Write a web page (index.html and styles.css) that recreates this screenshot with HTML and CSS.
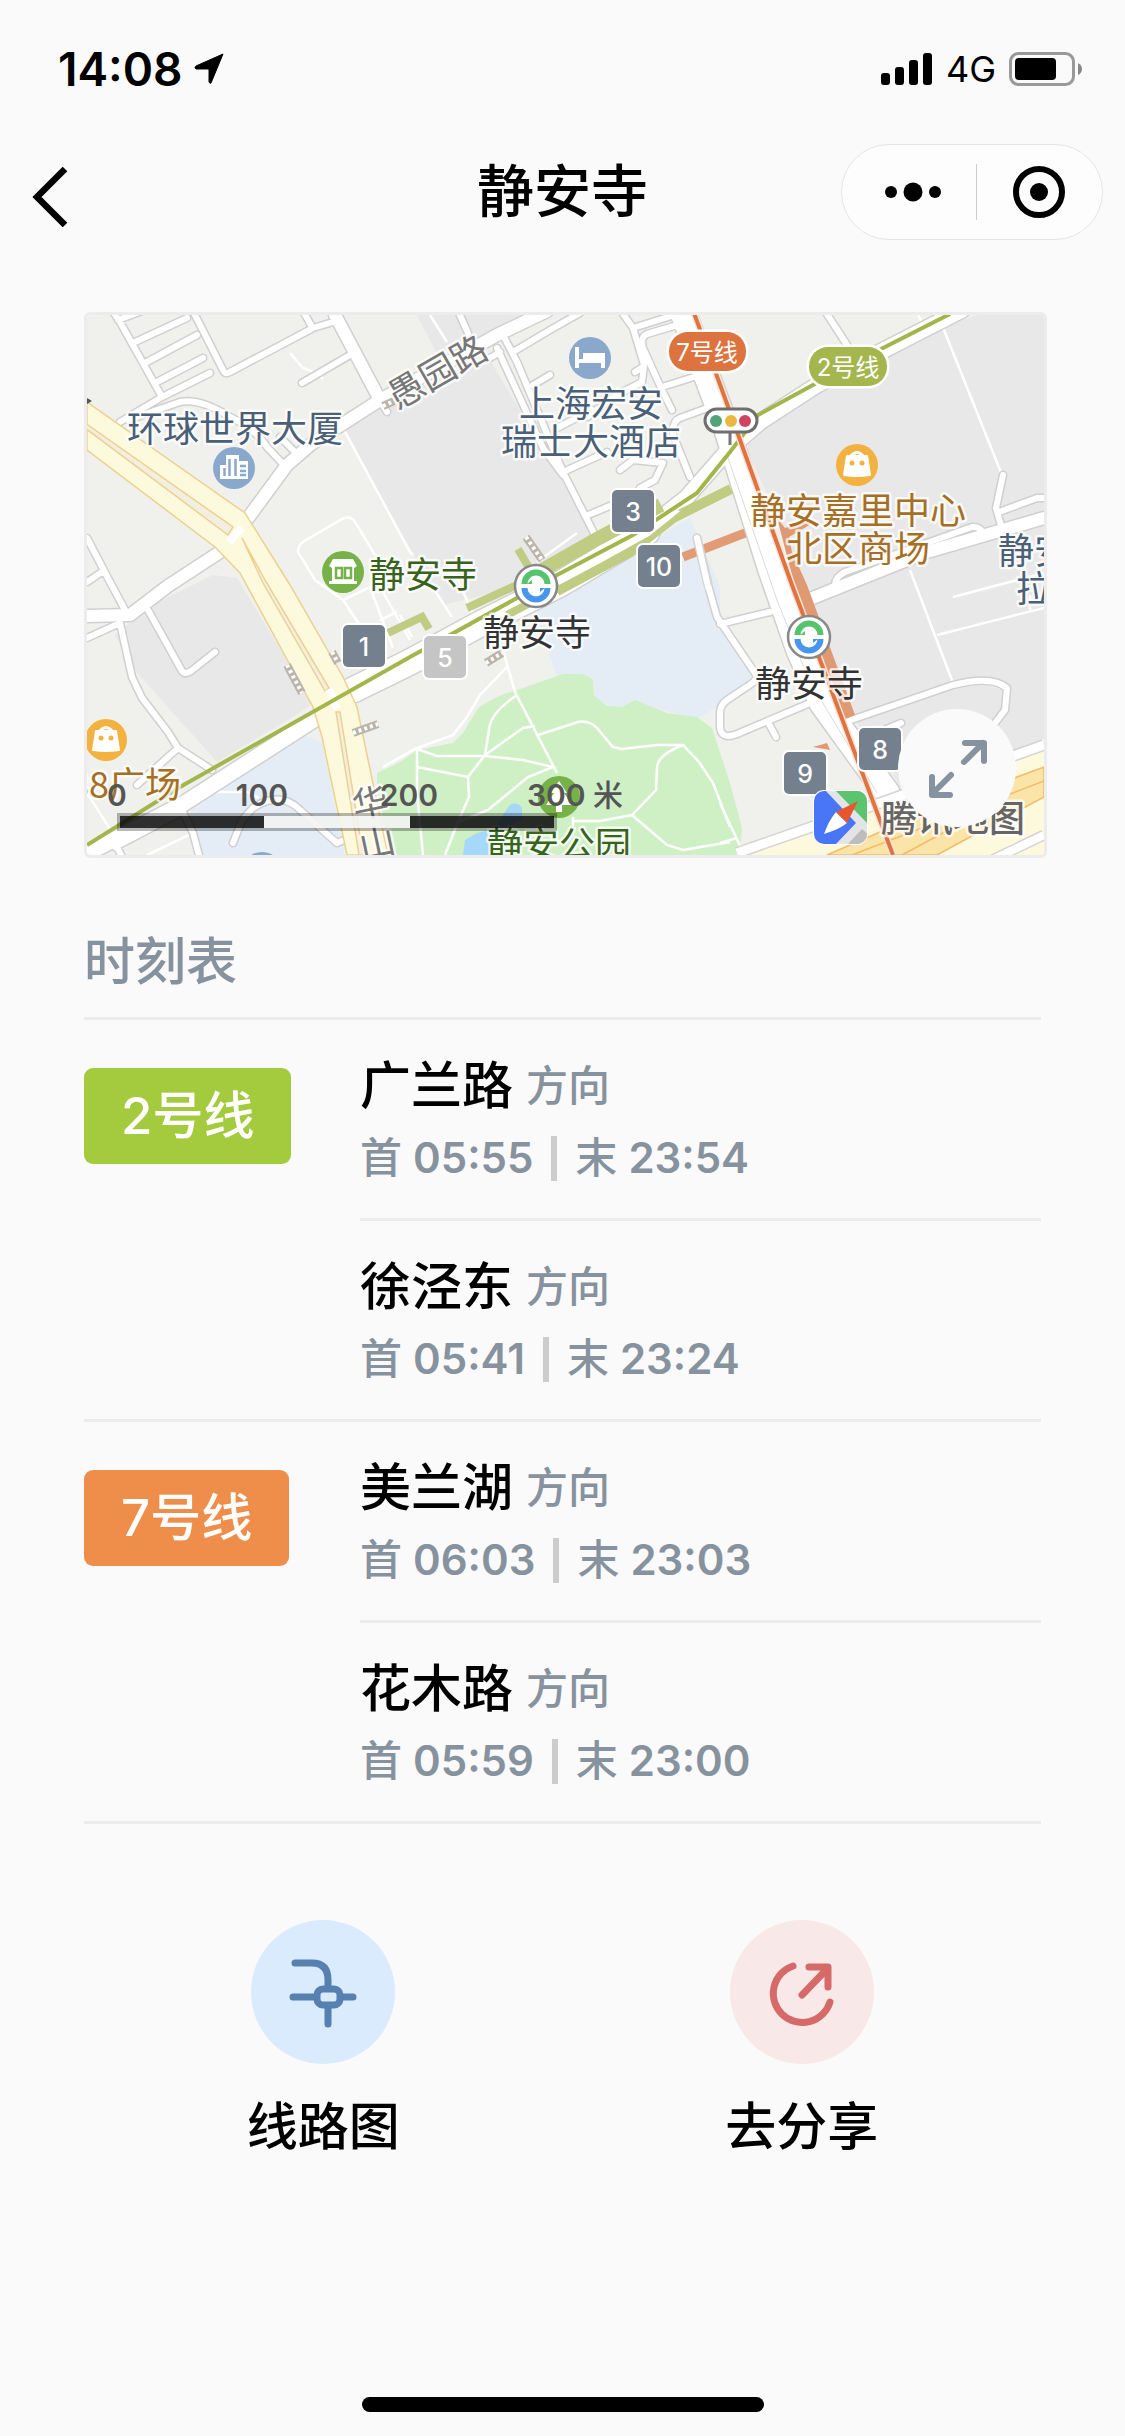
FILE: index.html
```html
<!DOCTYPE html>
<html lang="zh-CN">
<head>
  <meta charset="UTF-8">
  <meta name="viewport" content="width=device-width">
  <title>静安寺</title>
  <link rel="stylesheet" href="styles.css">
</head>
<body>
<div class="status-bar">
  <div class="status-left">
    <span class="clock">14:08</span>
    <svg class="location" width="32" height="32" viewBox="0 0 32 32"><path d="M30 1 L18 30 Q17 31 16 29 V16 H3 Q1 15 3 13 Z" fill="#000" stroke="#000" stroke-width="1" stroke-linejoin="round"/></svg>
  </div>
  <div class="status-right">
    <svg width="52" height="34" viewBox="0 0 52 34">
      <rect x="0" y="21" width="9" height="12" rx="3"/>
      <rect x="14" y="15" width="9" height="18" rx="3"/>
      <rect x="28" y="8" width="9" height="25" rx="3"/>
      <rect x="42" y="1" width="9" height="32" rx="3"/>
    </svg>
    <span class="network">4G</span>
    <svg width="74" height="34" viewBox="0 0 74 34">
      <rect x="1.5" y="1.5" width="63" height="31" rx="8" fill="none" stroke="#999" stroke-width="3"/>
      <rect x="6" y="6" width="41" height="22" rx="4"/>
      <path d="M69 11 Q73 13 73 17 Q73 21 69 23 Z" fill="#888"/>
    </svg>
  </div>
</div>

<header class="nav">
  <button class="back" aria-label="返回">
    <svg width="36" height="60" viewBox="0 0 36 60"><path d="M33 2 L5 30 L33 58" fill="none" stroke="#000" stroke-width="6.500"/></svg>
  </button>
  <h1>静安寺</h1>
  <div class="capsule">
    <button class="more" aria-label="更多">
      <svg width="58" height="20" viewBox="0 0 58 20"><circle cx="7" cy="10" r="6"/><circle cx="29" cy="10" r="9.5"/><circle cx="51" cy="10" r="6"/></svg>
    </button>
    <button aria-label="关闭">
      <svg width="52" height="52" viewBox="0 0 52 52"><circle cx="26" cy="26" r="23" fill="none" stroke="#000" stroke-width="6"/><circle cx="26" cy="26" r="9"/></svg>
    </button>
  </div>
</header>

<main>
  <div class="map">
    <svg class="map-canvas" viewBox="0 0 957 540">
      <defs>
        <path id="roads-l" d="M161 203 L200 150 L223 130 L293 85 L410 20 L460 -4 M248 0 L293 85 M150 220 L133 237 L81 271 L43 300 L0 301 M713 288 L840 237 L957 203"/>
        <path id="roads-m" d="M25 -5 L33 7 L75 82 M31 5 L63 -7 M48 27 L100 3 M58 48 L110 20 M70 67 L116 43 M33 107 L75 82 L123 58
          M106 -4 L136 55 Q138 60 143 57 L226 13 L246 7 M216 -4 L225 12 M215 68 L263 40 M41 105 L93 87 Q113 83 143 102 Q170 115 180 132 L195 148 M193 122 L208 137 M291 82 L300 97
          M0 223 L23 267 L38 295 M0 267 L15 257 M0 323 L33 308 L45 362 L55 383 L81 417 L91 433 L125 455 M91 433 L50 470 M61 295 L95 356 Q98 360 104 356 L128 337
          M371 -4 L381 18 M403 43 L413 37 M416 20 L430 47 L476 157 L513 230 M410 33 L456 133 L476 160 M426 37 L463 15 L493 -2 M446 70 L463 60 M470 113 L505 95 M476 157 L520 137 M501 200 L530 188
          M533 155 L546 145 L576 148 L568 165 L553 173 M603 162 L586 120 Q585 106 593 103 L623 92 M575 72 L610 61 M534 -4 L546 13 L557 50 L555 67 L530 80 L500 102 M548 57 L556 52 M546 13 L594 -2 M594 9 L560 19 Q553 22 556 33 L575 75 L585 95
          M738 -4 L762 33 M916 160 L909 193 L915 214 M912 197 L950 183 L962 183 M748 270 Q748 262 758 257 L885 212 Q893 211 897 219
          M610 223 L621 270 L630 302 L668 358 Q672 364 664 369 L640 385 Q633 390 633 398 L633 413 Q635 425 650 419 L723 388 M633 309 L683 297 M681 407 L689 422
          M764 405 L866 370 Q905 360 920 373 L918 395 L905 412 M761 412 L776 438 L806 482 M790 418 L814 408
          M94 493 L106 518 L113 544 M146 528 L155 505 L166 493 Q193 475 213 495 L250 528 L262 523 M28 532 L93 498 M30 532 L36 544"/>
        <path id="metro-road" d="M-5 541 L96 489 L233 401 L266 378"/>
        <path id="metro-road-wide" d="M266 375 L323 347 L393 309 L473 269 L560 217"/>
        <path id="metro-road-east" d="M550 222 L600 182 L643 133 L673 107 L730 70 L793 37 L875 -5"/>
        <path id="changde" d="M595 -5 L640 115 L684 255 L712 335 L735 388 L800 478"/>
        <g id="bag">
          <circle r="21" fill="#f3b23f"/>
          <path d="M-10 -9 H10 L13 10 Q0 12 -13 10 Z" fill="#fff" stroke="#fff" stroke-width="2" stroke-linejoin="round"/>
          <path d="M-6 -9 Q0 -16 6 -9" fill="none" stroke="#fff" stroke-width="3"/>
          <circle cx="-5" cy="-2" r="2.5" fill="#f3b23f"/><circle cx="5" cy="-2" r="2.5" fill="#f3b23f"/>
        </g>
        <g id="station">
          <circle r="21" fill="#fff" stroke="#888" stroke-width="2.5"/>
          <path d="M-11.500 -2 A11.500 11.500 0 0 1 11.500 -2" fill="none" stroke="#57c36c" stroke-width="6"/>
          <path d="M-11.500 2 A11.500 11.500 0 0 0 11.500 2" fill="none" stroke="#4795ec" stroke-width="6"/>
          <path d="M-9 -2 L-4 -6 V-2 Z" fill="#57c36c"/>
          <path d="M9 2 L4 6 V2 Z" fill="#4795ec"/>
        </g>
      </defs>

      <!-- 地块 -->
      <rect width="957" height="540" fill="#f0f1ed"/>
      <g fill="#e8e8e8">
        <path d="M255 113 L313 83 L400 40 L513 230 L440 270 L356 290 L325 237 Z"/>
        <path d="M330 0 H446 L400 25 L353 45 Z"/>
        <path d="M663 123 L696 97 L800 33 L890 0 H957 V425 L813 472 L790 430 L757 395 L700 223 L660 135 Z"/>
        <path d="M28 320 L61 292 L126 260 L150 263 L226 388 L206 402 L130 447 L46 353 Z"/>
      </g>
      <g fill="#e4edf6">
        <path d="M206 423 Q222 418 235 428 L258 540 H113 L103 495 L126 478 Z"/>
        <path d="M603 203 L543 237 L446 290 L470 362 L506 362 L508 382 L530 396 L548 388 L610 404 L633 390 L666 362 L633 308 V272 Z"/>
      </g>
      <path d="M290 458 L313 447 L330 435 L366 428 L376 418 L391 393 Q410 380 430 375 L476 359 H495 L506 364 L507 380 L520 391 L535 392 L548 385 L580 398 L610 402 L625 413 L643 468 L655 513 L653 540 H303 L290 470 Z" fill="#cff0c5"/>
      <path d="M376 540 L378 525 L390 518 L406 514 L423 490 Q430 486 435 493 V505 L413 515 L402 540 Z" fill="#a5d8fa"/>

      <!-- 小路 -->
      <g class="paths">
        <path d="M203 38 L216 53 L230 58 L236 64 M256 113 L323 237 L326 240 M228 265 L211 237 Q211 229 219 225 L255 204 Q264 200 268 207 L288 240 M228 265 L256 285 L276 315 M256 285 L283 272 L306 333 M293 272 L323 325 M293 305 L310 297 M313 300 L325 322 M343 268 L365 302 M371 265 L385 297 M343 0 L360 27 M490 218 L450 247"/>
        <path d="M855 10 L915 160 M831 0 L835 7 M823 255 L866 368 M850 320 L957 293 M866 282 L957 258 M943 280 V295 M116 477 H160 L172 483 M0 478 L30 525 M60 540 L106 518 M633 488 L655 535 M633 528 L650 523"/>
        <path d="M420 352 L393 380 L380 402 L366 420 L328 434 L296 452 M415 332 L428 377 L470 458 M430 380 Q403 398 402 415 L398 440 M398 440 L436 413 L448 411 M451 420 L491 407 Q502 405 510 413 L526 432 L535 434 L570 430 H596 L612 447 L626 468 L643 512 M596 430 Q570 440 570 453 L569 475 L545 500 L513 506 H486 M545 500 L580 530 L596 535 L643 527 M330 434 L350 441 H398 L436 445 L466 452 L441 462 L401 495 L371 507 M398 440 L381 462 L382 482 L371 507 L358 540 M330 434 V478 L336 540 M330 452 L381 462 M486 502 V515"/>
      </g>

      <!-- 道路 -->
      <g class="edge">
        <use href="#roads-m" stroke-width="9"/>
        <use href="#roads-l" stroke-width="15"/>
        <use href="#metro-road" stroke-width="18"/>
        <use href="#metro-road-wide" stroke-width="28"/>
        <use href="#metro-road-east" stroke-width="18"/>
        <use href="#changde" stroke-width="28"/>
      </g>
      <g class="fill">
        <use href="#roads-m" stroke-width="6"/>
        <use href="#roads-l" stroke-width="12"/>
        <use href="#metro-road" stroke-width="15"/>
        <use href="#metro-road-wide" stroke-width="25"/>
        <use href="#metro-road-east" stroke-width="15"/>
        <use href="#changde" stroke-width="25"/>
      </g>
      <path d="M640 140 L690 285 L722 365 L790 478 M285 363 L385 310" fill="none" stroke="#dadada" stroke-width="1"/>

      <!-- 高架 -->
      <path d="M0 87 L158 198 L203 270 L256 362 L270 392 L301 540 H260 L235 422 L226 392 L153 258 L128 232 L0 135 Z" fill="#fdf9dd" stroke="#ecd190" stroke-width="1.5"/>
      <path d="M-2 108 L146 212 L141 220 L-2 113 Z M155 223 L178 265 L242 373 L238 376 L176 268 Z M249 397 H253 L276 540 H272 Z" fill="#f3efe0" stroke="#ecd190" stroke-width="1.5"/>
      <path d="M155 213 L142 227 M242 374 L250 394" stroke="#fff" stroke-width="8"/>
      <path d="M655 540 L793 489 L957 424 V540 Z" fill="#fdf9dd"/>
      <path d="M650 538 L793 488 L957 430" fill="none" stroke="#d4d4d4" stroke-width="12"/>
      <path d="M650 538 L793 488 L957 430" fill="none" stroke="#fff" stroke-width="9"/>
      <path d="M740 540 L860 488 L957 452 V482 L850 540 Z" fill="#fbe4a8" stroke="#f3bb68" stroke-width="1.5"/>
      <path d="M765 540 L957 466 M815 540 L880 505" fill="none" stroke="#f3bb68" stroke-width="1.5"/>
      <path d="M905 545 L957 520" stroke="#d4d4d4" stroke-width="11"/>
      <path d="M905 545 L957 520" stroke="#fff" stroke-width="8"/>

      <!-- 站台与线路 -->
      <g fill="none" stroke="#bfcc82">
        <path d="M431 234 L441 251 M380 293 L430 270 M301 318 L335 302 L342 314 M420 300 L485 266" stroke-width="8"/>
        <path d="M450 258 L510 224 L574 190" stroke-width="14"/>
        <path d="M470 276 L543 237 L586 203 L644 174" stroke-width="10"/>
      </g>
      <path d="M470 266 L513 243 L560 217 L590 193" stroke="#fff" stroke-width="9" fill="none"/>
      <path d="M596 242 L658 218" stroke="#e39b76" stroke-width="9"/>
      <path d="M690 203 L698 213 L723 205 L724 209 L702 222 L705 237 L711 250 L720 270 L768 400 L756 405 L715 298 Z M726 432 L740 428 L743 435 Z" fill="#df9a74"/>
      <path d="M0 530 L93 472 L323 342 L430 283 L470 260 L546 220 L610 178 L643 137 L671 100 L726 70 L796 33 L863 -1" fill="none" stroke="#a2b64c" stroke-width="4"/>
      <path d="M607 -2 L643 97 L705 270 L806 540" fill="none" stroke="#fbe3d8" stroke-width="7"/>
      <path d="M607 -2 L643 97 L705 270 L806 540" fill="none" stroke="#df7440" stroke-width="4"/>
      <path d="M610 223 L621 268" fill="none" stroke="#d4d4d4" stroke-width="9" stroke-linecap="round"/>
      <path d="M610 223 L621 272" fill="none" stroke="#fff" stroke-width="6" stroke-linecap="round"/>

      <!-- 天桥 -->
      <g fill="none" stroke="#bab5a8" stroke-width="8"><path id="bridges" d="M296 91 L307 86 M439 222 L455 245 M200 350 L215 378 M245 337 L251 348 M266 418 L291 409 M399 348 L415 338"/></g>
      <path d="M296 91 L307 86 M439 222 L455 245 M200 350 L215 378 M245 337 L251 348 M266 418 L291 409 M399 348 L415 338" fill="none" stroke="#fff" stroke-width="4" stroke-dasharray="3 3"/>
      <path d="M0 83 L5 86 L0 89 Z" fill="#555"/>

      <!-- 图标 -->
      <g transform="translate(147 153)">
        <circle r="21" fill="#8aa8cc"/>
        <path d="M-14 11 V-3 H-8 V-13 H5 V-7 H14 V11 Z" fill="#fff"/>
        <path d="M-9.500 0 V8 M-4.500 -9 V8 M1.500 -9 V8 M6 -2 H12 M6 3 H12 M6 7 H12" stroke="#8aa8cc" stroke-width="2.500"/>
      </g>
      <g transform="translate(503 43)">
        <circle r="21" fill="#8aa8cc"/>
        <path d="M-13 -11 V10 M-13 3 H13 M13 10 V-3 H-5 V3" fill="none" stroke="#fff" stroke-width="4"/>
        <rect x="-6" y="-4" width="21" height="8" fill="#fff"/>
      </g>
      <use href="#bag" x="770" y="150"/>
      <use href="#bag" x="19" y="425"/>
      <circle cx="175" cy="558" r="21" fill="#8aa8cc"/>
      <g transform="translate(256 257)">
        <circle r="21" fill="#76b247"/>
        <path d="M-14 -6 L-10 -13 H10 L14 -6 L11 -4 V9 H14 V12 H-14 V9 H-11 V-4 Z" fill="#fff"/>
        <path d="M-7 -4 H-1 V6 H-7 Z M2 -4 H8 V6 H2 Z" fill="none" stroke="#76b247" stroke-width="2.500"/>
      </g>
      <g transform="translate(472 482)">
        <circle r="21" fill="#76b247"/>
        <path d="M0 -16 L8 -4 H5 L13 8 H3 V15 H-3 V8 H-13 L-5 -4 H-8 Z" fill="#fff"/>
      </g>
      <use href="#station" x="449" y="271"/>
      <use href="#station" x="722" y="322"/>
      <path d="M643 117 V130" stroke="#777" stroke-width="3"/>
      <rect x="618" y="94" width="52" height="23" rx="11.500" fill="#fff" stroke="#6f6f6f" stroke-width="3"/>
      <circle cx="629" cy="106" r="6" fill="#50a578"/><circle cx="644" cy="106" r="6" fill="#e8b840"/><circle cx="658" cy="106" r="6" fill="#cf4561"/>

      <!-- 出入口 -->
      <g class="exits">
        <rect x="256" y="310" width="42" height="42" rx="5"/><text x="277" y="341">1</text>
        <rect x="525" y="175" width="42" height="42" rx="5"/><text x="546" y="206">3</text>
        <rect x="551" y="230" width="42" height="42" rx="5"/><text x="572" y="261">10</text>
        <rect class="closed" x="337" y="321" width="42" height="42" rx="5"/><text x="358" y="352">5</text>
        <rect x="697" y="437" width="42" height="42" rx="5"/><text x="718" y="468">9</text>
        <rect x="772" y="413" width="42" height="42" rx="5"/><text x="793" y="444">8</text>
      </g>
      <g class="pills">
        <rect x="582" y="17" width="77" height="39" rx="19" fill="#dd743f"/><text x="620" y="46">7号线</text>
        <rect x="722" y="32" width="78" height="39" rx="19" fill="#a5b64f"/><text x="761" y="61">2号线</text>
      </g>

      <!-- 地名 -->
      <g class="labels">
        <text class="road" x="350" y="70" transform="rotate(-30 350 56)">愚园路</text>
        <text class="road" x="283" y="501" transform="rotate(-12 283 487)">华</text>
        <text class="road" x="290" y="541" transform="rotate(-12 290 527)">山</text>
        <g class="place">
          <text x="148" y="127">环球世界大厦</text>
          <text x="504" y="102">上海宏安</text>
          <text x="504" y="140">瑞士大酒店</text>
          <text x="947" y="249">静安</text>
          <text x="947" y="287">拉</text>
        </g>
        <g class="shop">
          <text x="771" y="209">静安嘉里中心</text>
          <text x="771" y="247">北区商场</text>
          <text x="38" y="483">88广场</text>
        </g>
        <g class="park">
          <text x="336" y="273">静安寺</text>
          <text x="472" y="543">静安公园</text>
        </g>
        <text x="450" y="331">静安寺</text>
        <text x="722" y="382">静安寺</text>
        <text class="brand" x="866" y="517">腾讯地图</text>
      </g>

      <!-- 比例尺 -->
      <g class="scale">
        <rect x="30" y="498" width="440" height="18" fill="#000" opacity=".28"/>
        <rect x="33" y="501" width="144" height="12" fill="#000" opacity=".75"/>
        <rect x="177" y="501" width="146" height="12" fill="#fff" opacity=".85"/>
        <rect x="323" y="501" width="144" height="12" fill="#000" opacity=".75"/>
        <text x="30" y="491">0</text><text x="175" y="491">100</text><text x="322" y="491">200</text><text x="488" y="491">300 <tspan class="unit">米</tspan></text>
      </g>

      <svg x="726" y="475" width="55" height="55" viewBox="0 0 55 55">
        <clipPath id="logo-clip"><rect x="1" y="1" width="53" height="53" rx="10"/></clipPath>
        <rect width="55" height="55" rx="11" fill="#fff"/>
        <g clip-path="url(#logo-clip)">
          <rect width="55" height="55" fill="#4876f6"/>
          <path d="M12 0 H55 V55 H22 L43 33 Z" fill="#e3e4e6"/>
          <path d="M22 0 H55 V34 Z" fill="#5bc46e"/>
          <path d="M34 55 L49 39 L55 44 V55 Z" fill="#bdbdbd"/>
          <path d="M23 22 L34 33 Q27 39 11 44 Q16 30 23 22 Z" fill="#fff"/>
          <path d="M23 22 L45 11 L34 33 Z" fill="#e8562d"/>
        </g>
      </svg>
    </svg>
    <button class="fullscreen" aria-label="全屏">
      <svg viewBox="0 0 118 118"><path d="M66 53 L85 34 M67 34 H86 V52 M53 66 L34 85 M34 68 V86 H52" fill="none" stroke="#8792a0" stroke-width="6" stroke-linecap="round" stroke-linejoin="round"/></svg>
    </button>
  </div>

  <h2>时刻表</h2>
  <section class="line">
    <div class="line-name"><span class="badge line-2">2号线</span></div>
    <ul>
      <li><p class="direction">广兰路<small>方向</small></p><p class="times">首<b>05:55</b><i></i>末<b>23:54</b></p></li>
      <li><p class="direction">徐泾东<small>方向</small></p><p class="times">首<b>05:41</b><i></i>末<b>23:24</b></p></li>
    </ul>
  </section>
  <section class="line">
    <div class="line-name"><span class="badge line-7">7号线</span></div>
    <ul>
      <li><p class="direction">美兰湖<small>方向</small></p><p class="times">首<b>06:03</b><i></i>末<b>23:03</b></p></li>
      <li><p class="direction">花木路<small>方向</small></p><p class="times">首<b>05:59</b><i></i>末<b>23:00</b></p></li>
    </ul>
  </section>

  <div class="actions">
    <button>
      <span class="icon blue"><svg viewBox="0 0 144 144"><path d="M44 43 H61 Q77 43 77 60 V67 M42 77 H64 M90 77 H102 M77 87 V104"/><rect x="66" y="69" width="23" height="16" rx="6"/></svg></span>
      线路图
    </button>
    <button>
      <span class="icon red"><svg viewBox="0 0 144 144"><path d="M63 46 A29 29 0 1 0 100 82 M72 75 L98 48 M79 47 H98 V67"/></svg></span>
      去分享
    </button>
  </div>
</main>
<div class="home-indicator"></div>
</body>
</html>
```

FILE: styles.css
```css
* {
  box-sizing: border-box;
}
body {
  margin: 0;
  min-height: 100vh;
  display: flex;
  flex-direction: column;
  background: #fafafa;
  color: #000;
  font-family: Inter, "Noto Sans CJK SC", sans-serif;
}
button {
  border: 0;
  padding: 0;
  background: none;
  color: inherit;
  font: inherit;
  cursor: pointer;
}
h1, h2, p, ul {
  margin: 0;
  padding: 0;
}
svg {
  display: block;
}

/* 状态栏 */
.status-bar {
  height: 132px;
  padding: 6px 42px 0 58px;
  display: flex;
  align-items: center;
  justify-content: space-between;
}
.status-left, .status-right {
  display: flex;
  align-items: center;
}
.status-left {
  gap: 10px;
}
.status-right {
  gap: 13px;
}
.clock {
  font-size: 46px;
  font-weight: 600;
}
.network {
  font-size: 36px;
}

/* 导航 */
.nav {
  height: 120px;
  padding: 0 22px;
  display: grid;
  grid-template-columns: 1fr auto 1fr;
  align-items: center;
}
.nav h1 {
  font-size: 57px;
  font-weight: 500;
  line-height: 72px;
}
.back {
  justify-self: start;
  padding: 10px 10px 0;
}
.capsule {
  justify-self: end;
  width: 262px;
  height: 96px;
  display: flex;
  align-items: center;
  border: 1px solid #e5e5e5;
  border-radius: 48px;
  background: #fdfdfd;
}
.capsule button {
  flex: 1;
  height: 56px;
  display: flex;
  align-items: center;
  justify-content: center;
}
.capsule .more {
  padding-left: 8px;
}
.capsule button + button {
  border-left: 1px solid #ccc;
}

main {
  padding: 60px 84px 0;
}

/* 地图 */
.map {
  position: relative;
  box-sizing: content-box;
  width: 100%;
  border: 3px solid #ececec;
  border-radius: 6px;
  overflow: hidden;
}
.map-canvas {
  width: 100%;
}
.paths {
  fill: none;
  stroke: #fff;
  stroke-width: 2.5;
}
.edge, .fill {
  fill: none;
  stroke-linecap: round;
  stroke-linejoin: round;
}
.edge {
  stroke: #d0d0d0;
}
.fill {
  stroke: #fff;
}
.exits rect {
  fill: #75808e;
  stroke: #fff;
  stroke-width: 4;
  paint-order: stroke;
}
.exits .closed {
  fill: #c5c5c5;
}
.exits text {
  fill: #fff;
  font-size: 25px;
  font-weight: 500;
  text-anchor: middle;
}
.pills rect {
  stroke: #fff;
  stroke-width: 5;
  paint-order: stroke;
}
.pills text {
  fill: #fff;
  font-size: 24px;
  text-anchor: middle;
}
.labels text {
  fill: #333;
  font-family: "Noto Sans CJK SC", sans-serif;
  font-size: 36px;
  text-anchor: middle;
  stroke: rgba(255, 255, 255, 0.75);
  stroke-width: 5px;
  stroke-linejoin: round;
  paint-order: stroke;
}
.labels .road {
  fill: #777;
}
.labels .place text {
  fill: #4a5f78;
}
.labels .shop text {
  fill: #a66f24;
}
.labels .park text {
  fill: #38631c;
}
.labels .brand {
  fill: #666;
  font-weight: 500;
}
.scale text {
  fill: #555;
  font-size: 30px;
  font-weight: 600;
  text-anchor: middle;
}
.scale .unit {
  font-weight: 500;
}
.fullscreen {
  position: absolute;
  right: 28px;
  bottom: 28px;
  width: 118px;
  height: 118px;
  border-radius: 50%;
  background: #fafafa;
}

/* 时刻表 */
h2 {
  margin-top: 68px;
  padding-bottom: 19px;
  border-bottom: 3px solid #ececec;
  color: #87929f;
  font-size: 51px;
  font-weight: 500;
  line-height: 72px;
}
.line {
  display: flex;
  border-bottom: 3px solid #ececec;
}
.line-name {
  width: 276px;
  padding-top: 48px;
}
.badge {
  display: inline-block;
  padding: 0 37px;
  border-radius: 9px;
  color: #fff;
  font-size: 51px;
  font-weight: 500;
  line-height: 96px;
}
.line-2 {
  background: #a4cb3e;
}
.line-7 {
  background: #ef8d4a;
}
.line ul {
  flex: 1;
  list-style: none;
}
.line li {
  padding: 30px 0 24px;
}
.line li + li {
  border-top: 3px solid #ececec;
}
.direction {
  display: flex;
  align-items: center;
  font-size: 51px;
  font-weight: 500;
  line-height: 72px;
}
.direction small {
  margin-left: 13px;
  color: #87929f;
  font-size: 42px;
  font-weight: 500;
}
.times {
  display: flex;
  align-items: center;
  color: #87929f;
  font-size: 42px;
  font-weight: 500;
  line-height: 72px;
}
.times b {
  margin-left: 11px;
  font-weight: 600;
}
.times i {
  width: 6px;
  height: 45px;
  margin: 0 18px;
  background: #ccc;
}

/* 底部按钮 */
.actions {
  margin-top: 96px;
  display: flex;
}
.actions button {
  flex: 1;
  display: flex;
  flex-direction: column;
  align-items: center;
  gap: 27px;
  font-size: 51px;
  font-weight: 500;
  line-height: 72px;
}
.icon {
  width: 144px;
  height: 144px;
  border-radius: 50%;
  fill: none;
  stroke-width: 7;
  stroke-linecap: round;
  stroke-linejoin: round;
}
.blue {
  background: #d9ebfd;
  stroke: #5580b0;
}
.red {
  background: #f8e8e8;
  stroke: #d66a68;
}

.home-indicator {
  width: 402px;
  height: 15px;
  margin: auto auto 24px;
  border-radius: 8px;
  background: #000;
}
```
